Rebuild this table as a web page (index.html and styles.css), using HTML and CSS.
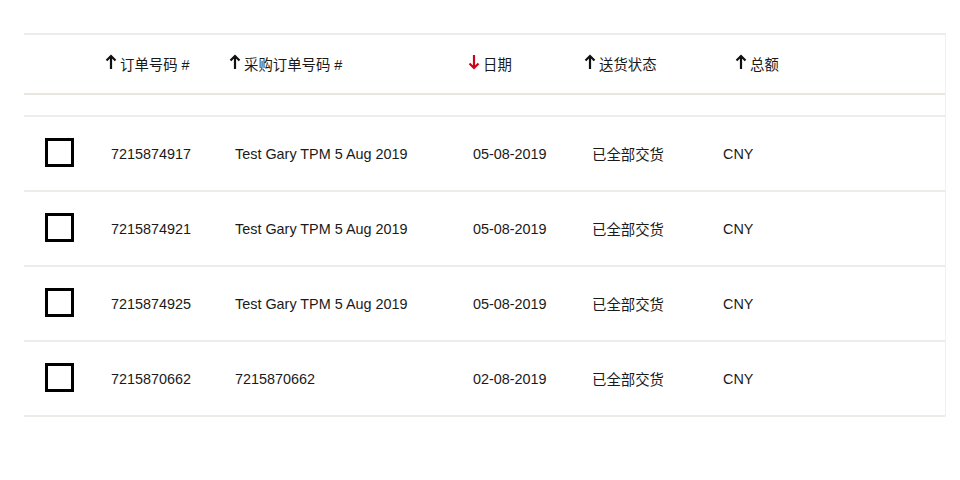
FILE: index.html
```html
<!DOCTYPE html>
<html lang="zh">
<head>
<meta charset="utf-8">
<link rel="stylesheet" href="styles.css">
</head>
<body>
<div class="page">
  <div class="table">
    <div class="row head">
      <div class="cell c1"></div>
      <div class="cell c2"><span class="sort"><svg class="arr" viewBox="0 0 12 16"><path d="M6 15V2.5M1.5 6.5L6 2L10.5 6.5"/></svg>订单号码 #</span></div>
      <div class="cell c3"><span class="sort"><svg class="arr" viewBox="0 0 12 16"><path d="M6 15V2.5M1.5 6.5L6 2L10.5 6.5"/></svg>采购订单号码 #</span></div>
      <div class="cell c4"><span class="sort"><svg class="arr red" viewBox="0 0 12 16"><path d="M6 1V13.5M1.5 9.5L6 14L10.5 9.5"/></svg>日期</span></div>
      <div class="cell c5"><span class="sort"><svg class="arr" viewBox="0 0 12 16"><path d="M6 15V2.5M1.5 6.5L6 2L10.5 6.5"/></svg>送货状态</span></div>
      <div class="cell c6 h6"><span class="sort"><svg class="arr" viewBox="0 0 12 16"><path d="M6 15V2.5M1.5 6.5L6 2L10.5 6.5"/></svg>总额</span></div>
    </div>
    <div class="spacer"></div>
    <div class="row data">
      <div class="cell c1"><span class="box"></span></div>
      <div class="cell c2 d2">7215874917</div>
      <div class="cell c3 d3">Test Gary TPM 5 Aug 2019</div>
      <div class="cell c4 d4">05-08-2019</div>
      <div class="cell c5 d5">已全部交货</div>
      <div class="cell c6">CNY</div>
    </div>
    <div class="row data">
      <div class="cell c1"><span class="box"></span></div>
      <div class="cell c2 d2">7215874921</div>
      <div class="cell c3 d3">Test Gary TPM 5 Aug 2019</div>
      <div class="cell c4 d4">05-08-2019</div>
      <div class="cell c5 d5">已全部交货</div>
      <div class="cell c6">CNY</div>
    </div>
    <div class="row data">
      <div class="cell c1"><span class="box"></span></div>
      <div class="cell c2 d2">7215874925</div>
      <div class="cell c3 d3">Test Gary TPM 5 Aug 2019</div>
      <div class="cell c4 d4">05-08-2019</div>
      <div class="cell c5 d5">已全部交货</div>
      <div class="cell c6">CNY</div>
    </div>
    <div class="row data">
      <div class="cell c1"><span class="box"></span></div>
      <div class="cell c2 d2">7215870662</div>
      <div class="cell c3 d3">7215870662</div>
      <div class="cell c4 d4">02-08-2019</div>
      <div class="cell c5 d5">已全部交货</div>
      <div class="cell c6">CNY</div>
    </div>
  </div>
</div>
</body>
</html>
```
FILE: styles.css
```css
html, body {
  margin: 0;
  padding: 0;
  background: #fff;
}
body {
  font-family: "Liberation Sans", "Noto Sans CJK SC", sans-serif;
  font-size: 14.4px;
  color: #1a1a1a;
}
.page {
  padding: 33px 14px 0 24px;
}
.table {
  border-top: 2px solid #eeece8;
  border-right: 1px solid #f1f0ee;
}
.row {
  display: grid;
  grid-template-columns: 81px 124px 239px 116px 139px 1fr;
  align-items: center;
}
.head {
  height: 58px;
  border-bottom: 2px solid #e9e6e0;
}
.spacer {
  height: 20px;
  border-bottom: 2px solid #eeece8;
}
.data {
  height: 73px;
  border-bottom: 2px solid #eeece8;
}
.cell {
  white-space: nowrap;
}
.sort {
  display: inline-flex;
  align-items: center;
  gap: 3px;
}
.arr {
  width: 12px;
  height: 16px;
  fill: none;
  stroke: #111;
  stroke-width: 2.2;
  position: relative;
  top: -2px;
}
.arr.red {
  stroke: #d0021b;
}
.h6 { padding-left: 12px; }
.d2 { padding-left: 6px; }
.d3 { padding-left: 6px; }
.d4 { padding-left: 5px; }
.d5 { padding-left: 8px; }
.c1 {
  padding-left: 21px;
  display: flex;
  align-items: center;
}
.box {
  display: block;
  width: 23px;
  height: 23px;
  border: 3px solid #000;
  position: relative;
  top: -1px;
}
```
